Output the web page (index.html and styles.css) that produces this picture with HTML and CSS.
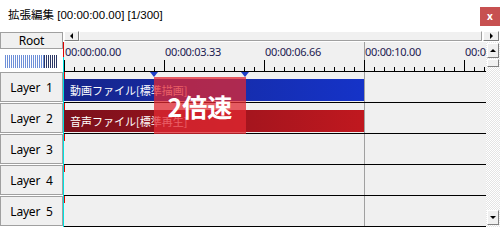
FILE: index.html
```html
<!DOCTYPE html>
<html>
<head>
<meta charset="utf-8">
<link rel="stylesheet" href="styles.css">
</head>
<body>
<div class="window">
  <div class="titlebar">
    <span class="title">拡張編集 [00:00:00.00] [1/300]</span>
    <div class="close">x</div>
  </div>
  <div class="main">
    <div class="left">
      <div class="btn root">Root</div>
      <div class="gauge"><div class="g-light"></div><div class="g-dark"></div></div>
      <div class="btn layer">Layer  1</div>
      <div class="btn layer">Layer  2</div>
      <div class="btn layer">Layer  3</div>
      <div class="btn layer">Layer  4</div>
      <div class="btn layer">Layer  5</div>
    </div>
    <div class="right">
      <div class="hscroll">
        <div class="sbtn hbtn"><span class="arrow arrow-left"></span></div>
        <div class="hthumb"></div>
        <div class="sbtn hbtn hbtn-right"><span class="arrow arrow-right"></span></div>
      </div>
      <div class="lower">
        <div class="timeline">
          <div class="ruler">
            <div class="cell">00:00:00.00</div>
            <div class="cell">00:00:03.33</div>
            <div class="cell">00:00:06.66</div>
            <div class="cell">00:00:10.00</div>
            <div class="cell">00:00:13.33</div>
          </div>
          <div class="row"><div class="clip clip-video">動画ファイル[標準描画]</div></div>
          <div class="row"><div class="clip clip-audio">音声ファイル[標準再生]</div></div>
          <div class="row"></div>
          <div class="row"></div>
          <div class="row"></div>
          <div class="cursor"></div>
          <div class="marker marker-a"></div>
          <div class="marker marker-b"></div>
          <div class="speed">2倍速</div>
        </div>
        <div class="vscroll">
          <div class="sbtn vbtn"><span class="arrow arrow-up"></span></div>
          <div class="sbtn vthumb"></div>
          <div class="vspace"></div>
          <div class="sbtn vbtn"><span class="arrow arrow-down"></span></div>
        </div>
      </div>
    </div>
  </div>
</div>
</body>
</html>
```

FILE: styles.css
```css
* { box-sizing: border-box; }
html, body { margin: 0; padding: 0; }
body {
  width: 500px;
  height: 227px;
  overflow: hidden;
  background: #fff;
  font-family: "Noto Sans", "Noto Sans CJK JP", sans-serif;
}
.window { display: flex; flex-direction: column; height: 227px; }

.titlebar {
  height: 30px;
  flex: none;
  display: flex;
  align-items: flex-start;
  padding-left: 8px;
  background: #fff;
}
.title {
  flex: 1;
  font-family: "Liberation Sans", "Noto Sans CJK JP", sans-serif;
  font-size: 11.5px;
  line-height: 30px;
  color: #000;
  white-space: nowrap;
}
.close {
  width: 20px;
  height: 19px;
  margin-top: 7px;
  background: #c75050;
  color: #fff;
  font: bold 10px/18px "Noto Sans", sans-serif;
  text-align: center;
}

.main { flex: 1; display: flex; min-height: 0; }

.left {
  width: 63px;
  flex: none;
  display: flex;
  flex-direction: column;
  padding-top: 2px;
  background: #fff;
  overflow: hidden;
}
.btn {
  flex: none;
  border: 1px solid #a0a0a0;
  background: #f0f0f0;
  display: flex;
  align-items: center;
  justify-content: center;
  font-size: 12px;
  color: #000;
  white-space: pre;
  letter-spacing: -0.2px;
}
.root { height: 17px; }
.gauge { height: 13px; margin: 6px 6px 4px 5px; display: flex; flex: none; }
.g-light { flex: 1; background: repeating-linear-gradient(to right, #6d8fd8 0 1px, #fff 1px 2px); }
.g-dark { width: 13px; background: repeating-linear-gradient(to right, #2c3766 0 1px, #fff 1px 2px); }
.layer { height: 30px; margin-bottom: 1px; }

.right { flex: 1; display: flex; flex-direction: column; min-width: 0; }

.hscroll {
  height: 12px;
  flex: none;
  display: flex;
  padding: 1px 1px 1px 1px;
  background: #fff;
}
.sbtn {
  background: #f0f0f0;
  border: 1px solid;
  border-color: #fff #808080 #808080 #fff;
  display: flex;
  align-items: center;
  justify-content: center;
}
.hbtn { width: 15px; flex: none; }
.hbtn-right { width: 16px; margin-left: 1px; }
.hthumb {
  flex: 1;
  background: #f0f0f0;
  border: 1px solid;
  border-color: #fff #a0a0a0 #a0a0a0 #fff;
}
.arrow { width: 0; height: 0; border: 3px solid transparent; }
.arrow-left { border-right: 3px solid #000; border-left-width: 0; }
.arrow-right { border-left: 3px solid #000; border-right-width: 0; }
.arrow-up { border-bottom: 3px solid #000; border-top-width: 0; border-left-width: 3px; border-right-width: 3px; }
.arrow-down { border-top: 3px solid #000; border-bottom-width: 0; }

.lower { flex: 1; display: flex; min-height: 0; }

.timeline {
  width: 423px;
  flex: none;
  position: relative;
  overflow: hidden;
  display: flex;
  flex-direction: column;
  background: linear-gradient(to right, transparent 301px, #a0a0a0 301px 302px, transparent 302px), #f0f0f0;
}
.ruler {
  height: 30px;
  flex: none;
  display: flex;
  padding-left: 1px;
  border-bottom: 1px solid #000;
  overflow: hidden;
  background-image:
    linear-gradient(to right, #000 1px, transparent 1px),
    linear-gradient(to right, #000 1px, transparent 1px);
  background-size: 100px 11px, 10px 4px;
  background-repeat: repeat-x, repeat-x;
  background-position: 0 100%, 0 100%;
  background-origin: content-box, content-box;
}
.cell {
  flex: 0 0 100px;
  padding: 4px 0 0 1px;
  font-size: 11px;
  line-height: 12px;
  color: #1c2050;
  white-space: nowrap;
  letter-spacing: -0.3px;
}
.row {
  height: 31px;
  flex: none;
  display: flex;
  align-items: flex-start;
  border-bottom: 1px solid #000;
  background: linear-gradient(#e00000, #e00000) 1px 0 / 1px 7px no-repeat;
}
.clip {
  margin: 7px 0 0 1px;
  width: 300px;
  height: 22px;
  padding-left: 6px;
  font-family: "Noto Sans CJK JP", sans-serif;
  font-size: 11px;
  line-height: 22px;
  color: #fff;
  white-space: nowrap;
  overflow: hidden;
}
.clip-video { background: linear-gradient(to right, #16258a, #1533c8); }
.clip-audio { background: linear-gradient(to right, #7a101c, #c0181f); }

.cursor {
  position: absolute;
  left: 0;
  top: 0;
  bottom: 0;
  width: 1px;
  background: linear-gradient(#e00000 0 15px, #00e0e0 15px);
}
.marker {
  position: absolute;
  top: 30px;
  width: 0;
  height: 0;
  border-left: 4px solid transparent;
  border-right: 4px solid transparent;
  border-top: 5px solid #2040c8;
}
.marker-a { left: 87px; }
.marker-b { left: 178px; }
.speed {
  position: absolute;
  left: 91px;
  top: 35px;
  width: 92px;
  height: 57px;
  background: rgba(225, 40, 50, 0.75);
  display: flex;
  align-items: center;
  justify-content: center;
  color: #fff;
  font-family: "Noto Sans CJK JP", sans-serif;
  font-weight: bold;
  font-size: 25px;
}

.vscroll {
  width: 14px;
  flex: none;
  display: flex;
  flex-direction: column;
  padding: 1px 1px 2px 1px;
  background: repeating-conic-gradient(#e4e4e4 0 25%, #fff 0 50%) 0 0 / 2px 2px;
}
.vbtn { height: 15px; flex: none; }
.vthumb { height: 8px; flex: none; margin-top: 1px; }
.vspace { flex: 1; }
```
